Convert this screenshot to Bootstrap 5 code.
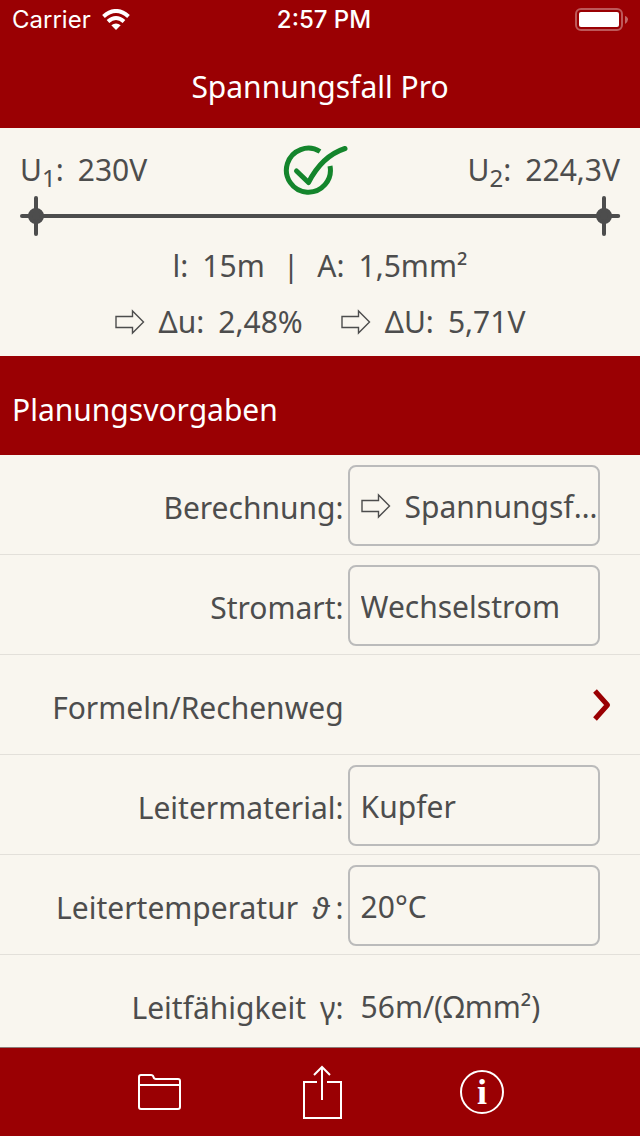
<!DOCTYPE html>
<html lang="de">
<head>
<meta charset="utf-8">
<meta name="viewport" content="width=device-width, initial-scale=1">
<title>Spannungsfall Pro</title>
<link href="https://cdn.jsdelivr.net/npm/bootstrap@5.3.0/dist/css/bootstrap.min.css" rel="stylesheet">
<style>
  :root { --brand: #9a0003; --paper: #f9f6ef; --ink: #4d4d4d; --edge: #bbbbbb; }
  body { background: var(--paper); color: var(--ink); font: 30px/40px "Noto Sans", sans-serif; }
  .brand-bar { background: var(--brand); color: #fff; }
  .status-line { height: 40px; padding: 0 12px; font: 24px/40px Inter, sans-serif; }
  .status-time { font-weight: 500; }
  .app-title { height: 88px; padding-top: 6px; font-size: 30px; font-weight: 400; }
  .summary { padding: 16px 20px 14px; }
  .summary sub { font-size: 24px; line-height: 1; bottom: -6px; }
  .pair { gap: 14px; }
  .figures { gap: 18px; margin-top: 10px; }
  .results { gap: 38px; margin-top: 16px; }
  .section-title { height: 99px; padding: 8px 12px 0; font-size: 30px; font-weight: 400; }
  .entry { height: 100px; border-bottom: 1px solid #e3e0da; color: inherit; }
  .entry-name { display: flex; justify-content: flex-end; gap: 14px; flex: 0 0 54%; padding-right: 2px; padding-top: 6px; white-space: nowrap; }
  .theta { font-style: italic; margin-right: 6px; }
  .entry-box { flex: 1 1 0; min-width: 0; height: 81px; margin: 2px 40px 0 2px; padding: 0 0 0 11px;
    border: 2px solid var(--edge); border-radius: 8px; gap: 14px; }
  .entry-box select { appearance: none; border: 0; padding: 3px 0 0; width: 100%; min-width: 0; height: 100%; background: none;
    color: inherit; font: inherit; overflow: hidden; text-overflow: ellipsis; white-space: nowrap; }
  .entry-value { padding-left: 15px; padding-top: 4px; }
  .entries { scrollbar-width: none; min-height: 0; }
  .entries::-webkit-scrollbar { display: none; }
  .tab-strip { height: 89px; border-top: 1px solid #8d7b78; gap: 117px; }
  .tab-strip button { color: #fff; background: none; border: 0; padding: 0; line-height: 0; }
</style>
</head>
<body>
<svg class="d-none">
  <symbol id="arrow" viewBox="0 0 30 26"><path d="M1 7.500H17.500V2L28.500 13L17.500 24V18.500H1Z" fill="none" stroke="currentColor" stroke-width="1.400"/></symbol>
</svg>
<div class="d-flex flex-column vh-100">
  <header class="brand-bar flex-shrink-0">
    <div class="status-line d-flex align-items-center justify-content-between">
      <div class="d-flex align-items-center gap-2 col">Carrier
        <svg width="32" height="22" viewBox="-2 0 32 22" fill="none" stroke="#fff" stroke-width="4" aria-label="WLAN"><path d="M2.500 7.500Q15-3.500 27.500 7.500"/><path d="M7 12.500Q15 5.500 23 12.500"/><path d="M15 21L10.300 16.300Q15 12.600 19.700 16.300Z" fill="#fff" stroke="none"/></svg>
      </div>
      <div class="status-time ps-2">2:57 PM</div>
      <div class="col d-flex justify-content-end">
        <svg width="53" height="24" viewBox="0 0 53 24" aria-label="Akku"><rect x="1" y="1" width="46" height="21" rx="5" fill="none" stroke="#fff" stroke-opacity=".35" stroke-width="2"/><rect x="4" y="4" width="40" height="15" rx="2" fill="#fff"/><path d="M50 8Q53 9 53 11.500T50 16Z" fill="#fff" fill-opacity=".4"/></svg>
      </div>
    </div>
    <h1 class="app-title d-flex align-items-center justify-content-center m-0">Spannungsfall Pro</h1>
  </header>

  <section class="summary flex-shrink-0">
    <div class="d-flex align-items-center justify-content-between">
      <div class="pair d-flex col"><span>U<sub>1</sub>:</span><span>230V</span></div>
      <svg width="76" height="52" viewBox="0 0 76 52" fill="none" stroke="#14852c" stroke-width="5" aria-label="In Ordnung"><path d="M38 7.500A22 22 0 1 0 48 22"/><path d="M14.500 27L26.500 38.500Q40 12 63 4.500" stroke-linecap="round" stroke-linejoin="round"/></svg>
      <div class="pair d-flex col justify-content-end"><span>U<sub>2</sub>:</span><span>224,3V</span></div>
    </div>
    <svg class="d-block w-100 overflow-visible" height="40" stroke="#4d4d4d" stroke-width="4" stroke-linecap="round" fill="#4d4d4d">
      <line x1="2" y1="20" x2="99.700%" y2="20"/>
      <path d="M16 2V38"/><circle cx="16" cy="20" r="6"/>
      <svg x="100%" overflow="visible"><path d="M-16 2V38"/><circle cx="-16" cy="20" r="6"/></svg>
    </svg>
    <div class="figures d-flex justify-content-center">
      <div class="pair d-flex"><span>l:</span><span>15m</span></div><span>|</span>
      <div class="pair d-flex"><span>A:</span><span>1,5mm²</span></div>
    </div>
    <div class="results d-flex justify-content-center">
      <div class="pair d-flex align-items-center"><svg width="30" height="26"><use href="#arrow"/></svg><span>Δu:</span><span>2,48%</span></div>
      <div class="pair d-flex align-items-center"><svg width="30" height="26"><use href="#arrow"/></svg><span>ΔU:</span><span>5,71V</span></div>
    </div>
  </section>

  <h2 class="section-title brand-bar d-flex align-items-center flex-shrink-0 m-0">Planungsvorgaben</h2>

  <main class="entries flex-fill overflow-auto">
    <div class="entry d-flex align-items-center">
      <label class="entry-name" for="calc">Berechnung:</label>
      <div class="entry-box d-flex align-items-center"><svg class="flex-shrink-0" width="30" height="26"><use href="#arrow"/></svg><select id="calc"><option>Spannungsfall</option></select></div>
    </div>
    <div class="entry d-flex align-items-center">
      <label class="entry-name" for="current">Stromart:</label>
      <div class="entry-box d-flex align-items-center"><select id="current"><option>Wechselstrom</option></select></div>
    </div>
    <a class="entry d-flex align-items-center text-decoration-none" href="#formeln">
      <span class="entry-name">Formeln/Rechenweg</span>
      <svg class="ms-auto me-4" width="24" height="34" viewBox="0 0 24 34" fill="none" stroke="#9a0003" stroke-width="5" stroke-linejoin="round"><path d="M3 3L15.500 17L3 31"/></svg>
    </a>
    <div class="entry d-flex align-items-center">
      <label class="entry-name" for="material">Leitermaterial:</label>
      <div class="entry-box d-flex align-items-center"><select id="material"><option>Kupfer</option></select></div>
    </div>
    <div class="entry d-flex align-items-center">
      <label class="entry-name" for="temp"><span>Leitertemperatur</span> <span><span class="theta">ϑ</span>:</span></label>
      <div class="entry-box d-flex align-items-center"><select id="temp"><option>20°C</option></select></div>
    </div>
    <div class="entry d-flex align-items-center">
      <span class="entry-name"><span>Leitfähigkeit</span> <span>γ:</span></span>
      <span class="entry-value">56m/(Ωmm²)</span>
    </div>
  </main>

  <nav class="tab-strip brand-bar d-flex align-items-center justify-content-center flex-shrink-0">
    <button type="button" aria-label="Projekte"><svg width="50" height="38" viewBox="0 0 50 38" fill="none" stroke="currentColor" stroke-width="2"><path d="M4 34V4Q4 2 6 2H16Q18 2 18.500 4Q19 6 21 6H43Q45 6 45 8V34Q45 36 43 36H6Q4 36 4 34ZM4 12H45"/></svg></button>
    <button type="button" aria-label="Teilen"><svg width="40" height="54" viewBox="0 0 40 54" fill="none" stroke="currentColor" stroke-width="2"><path d="M15 17H2V53H39V17H25M20 35V2M12 10L20 2L28 10"/></svg></button>
    <button type="button" aria-label="Info"><svg width="46" height="46" viewBox="0 0 46 46"><circle cx="23" cy="23" r="21" fill="none" stroke="currentColor" stroke-width="2"/><text x="23" y="35" text-anchor="middle" fill="currentColor" font-family="Liberation Serif, serif" font-weight="700" font-size="36">i</text></svg></button>
  </nav>
</div>
<script src="https://cdn.jsdelivr.net/npm/bootstrap@5.3.0/dist/js/bootstrap.bundle.min.js"></script>
</body>
</html>
